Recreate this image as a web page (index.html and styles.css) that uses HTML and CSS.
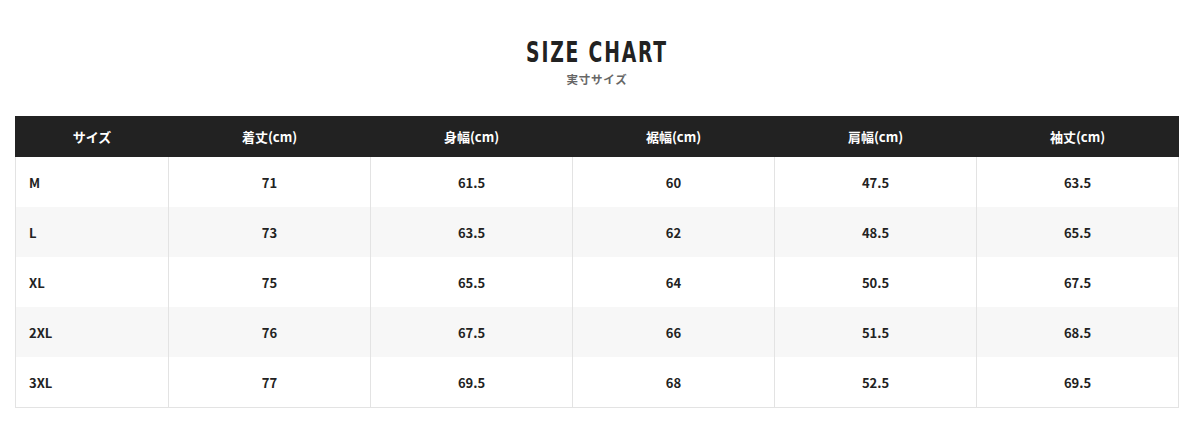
FILE: index.html
```html
<!DOCTYPE html>
<html lang="ja">
<head>
<meta charset="utf-8">
<title>Size Chart</title>
<link rel="stylesheet" href="styles.css">
</head>
<body>
<section class="chart">
  <header class="chart-head">
    <h2 class="chart-title">SIZE CHART</h2>
    <p class="chart-sub">実寸サイズ</p>
  </header>
  <table class="size-table">
    <colgroup>
      <col class="c-size">
      <col><col><col><col><col>
    </colgroup>
    <thead>
      <tr><th>サイズ</th><th>着丈(cm)</th><th>身幅(cm)</th><th>裾幅(cm)</th><th>肩幅(cm)</th><th>袖丈(cm)</th></tr>
    </thead>
    <tbody>
      <tr><td>M</td><td>71</td><td>61.5</td><td>60</td><td>47.5</td><td>63.5</td></tr>
      <tr><td>L</td><td>73</td><td>63.5</td><td>62</td><td>48.5</td><td>65.5</td></tr>
      <tr><td>XL</td><td>75</td><td>65.5</td><td>64</td><td>50.5</td><td>67.5</td></tr>
      <tr><td>2XL</td><td>76</td><td>67.5</td><td>66</td><td>51.5</td><td>68.5</td></tr>
      <tr><td>3XL</td><td>77</td><td>69.5</td><td>68</td><td>52.5</td><td>69.5</td></tr>
    </tbody>
  </table>
</section>
</body>
</html>
```
FILE: styles.css
```css
html, body {
  margin: 0;
  padding: 0;
  background: #fff;
}
body {
  font-family: "Noto Sans CJK JP", "Noto Sans", sans-serif;
  color: #222;
}
.chart {
  padding: 35px 21px 0 15px;
}
.chart-head {
  text-align: center;
  margin-bottom: 29px;
}
.chart-title {
  margin: 0;
  font-family: "DejaVu Sans Condensed", "Liberation Sans Narrow", sans-serif;
  font-weight: bold;
  font-size: 29px;
  line-height: 34px;
  letter-spacing: 2.5px;
  color: #222;
  transform: scaleX(0.72);
}
.chart-sub {
  margin: 2px 0 0;
  font-size: 11.5px;
  line-height: 16px;
  font-weight: bold;
  color: #666;
  letter-spacing: 0.8px;
}
.size-table {
  width: 1164px;
  border-collapse: collapse;
  table-layout: fixed;
  border: 1px solid #e3e3e3;
}
.c-size {
  width: 153px;
}
.size-table th {
  background: #222;
  color: #fff;
  font-size: 13px;
  font-weight: bold;
  height: 39px;
  padding: 0;
  text-align: center;
  border: 1px solid #222;
}
.size-table td {
  height: 50px;
  padding: 0;
  font-size: 13px;
  font-weight: bold;
  text-align: center;
  border-left: 1px solid #e3e3e3;
  border-right: 1px solid #e3e3e3;
}
.size-table td:first-child {
  text-align: left;
  padding-left: 13px;
}
.size-table tbody tr:nth-child(even) td {
  background: #f7f7f7;
}
```
